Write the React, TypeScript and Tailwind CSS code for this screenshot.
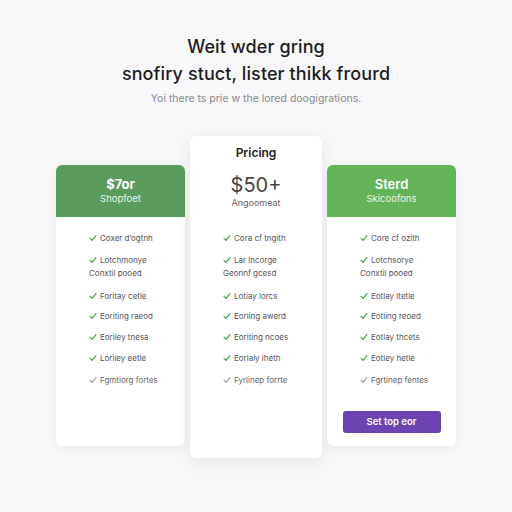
import React from 'react';

type Feature = { text: string; check?: boolean; faint?: boolean; gap?: string };

const Check = ({ faint }: { faint?: boolean }) => (
  <svg className="w-[8px] h-[8px] shrink-0" viewBox="0 0 12 12" fill="none">
    <path
      d="M1.5 6.5 4.5 9.5 10.5 2.5"
      stroke={faint ? '#9aa39a' : '#43a047'}
      strokeWidth={1.8}
      strokeLinecap="round"
      strokeLinejoin="round"
    />
  </svg>
);

const FeatureList = ({ items }: { items: Feature[] }) => (
  <ul className="flex flex-col pl-[33px] text-[8px] text-[#555]">
    {items.map((f, i) => (
      <li key={i} className={`flex items-center gap-[3px] h-[12px] ${f.gap ?? ''}`}>
        {f.check !== false && <Check faint={f.faint} />}
        <span className={f.faint ? 'text-[#666]' : ''}>{f.text}</span>
      </li>
    ))}
  </ul>
);

const left: Feature[] = [
  { text: 'Coxer d’ogtnh' },
  { text: 'Lotchmonye', gap: 'mt-[10px]' },
  { text: 'Conxtil pooed', check: false, gap: 'mt-[1px]' },
  { text: 'Foritay cetle', gap: 'mt-[11px]' },
  { text: 'Eoriting raeod', gap: 'mt-[8px]' },
  { text: 'Eoriley tnesa', gap: 'mt-[9px]' },
  { text: 'Loriley eetle', gap: 'mt-[9px]' },
  { text: 'Fgmtiorg fortes', faint: true, gap: 'mt-[10px]' },
];

const middle: Feature[] = [
  { text: 'Cora cf tngith' },
  { text: 'Lar lncorge', gap: 'mt-[10px]' },
  { text: 'Geonnf gcesd', check: false, gap: 'mt-[1px]' },
  { text: 'Lotiay lorcs', gap: 'mt-[11px]' },
  { text: 'Eorling awerd', gap: 'mt-[8px]' },
  { text: 'Eoriting ncoes', gap: 'mt-[9px]' },
  { text: 'Eorlaiy iheth', gap: 'mt-[9px]' },
  { text: 'Fyrlinep forrte', faint: true, gap: 'mt-[10px]' },
];

const right: Feature[] = [
  { text: 'Core cf ozith' },
  { text: 'Lotchsorye', gap: 'mt-[10px]' },
  { text: 'Conxtil pooed', check: false, gap: 'mt-[1px]' },
  { text: 'Eotlay ltetle', gap: 'mt-[11px]' },
  { text: 'Eotling reoed', gap: 'mt-[8px]' },
  { text: 'Eotlay thcets', gap: 'mt-[9px]' },
  { text: 'Eotley hetle', gap: 'mt-[9px]' },
  { text: 'Fgrtinep fentes', faint: true, gap: 'mt-[10px]' },
];

export default function App() {
  return (
    <div
      className="w-[512px] h-[512px] bg-[#f8f8fa] flex flex-col items-center overflow-hidden"
      style={{ fontFamily: 'Inter, "Noto Sans", sans-serif' }}
    >
      <h1 className="mt-[33px] text-[18px] leading-[27px] font-medium text-[#1d1d1f] text-center tracking-[0.1px]">
        Weit wder gring
        <br />
        snofiry stuct, lister thikk frourd
      </h1>
      <p className="mt-[4px] text-[10.5px] text-[#8a8a8e]">Yoi there ts prie w the lored doogigrations.</p>

      <div className="mt-[29px] flex items-start gap-[5px]">
        {/* left */}
        <div className="mt-[29px] w-[129px] h-[281px] bg-white rounded-[6px] shadow-[0_2px_10px_rgba(0,0,0,0.06)] overflow-hidden">
          <div className="h-[52px] bg-[#5a9c5d] flex flex-col items-center justify-center text-white">
            <div className="text-[13px] font-bold leading-[16px]">$7or</div>
            <div className="text-[9.5px] leading-[13px] text-[#eaf5ea]">Shopfoet</div>
          </div>
          <div className="pt-[15px]">
            <FeatureList items={left} />
          </div>
        </div>

        {/* middle */}
        <div className="w-[132px] h-[322px] bg-white rounded-[6px] shadow-[0_4px_18px_rgba(0,0,0,0.08)] flex flex-col">
          <div className="mt-[9px] text-center text-[12px] font-semibold text-[#222] leading-[16px]">Pricing</div>
          <div className="mt-[12px] text-center text-[20px] text-[#444] leading-[24px]">$50+</div>
          <div className="text-center text-[9px] text-[#666] leading-[11px]">Angoomeat</div>
          <div className="pt-[24px]">
            <FeatureList items={middle} />
          </div>
        </div>

        {/* right */}
        <div className="mt-[29px] w-[129px] h-[281px] bg-white rounded-[6px] shadow-[0_2px_10px_rgba(0,0,0,0.06)] overflow-hidden flex flex-col">
          <div className="h-[52px] bg-[#62b457] flex flex-col items-center justify-center text-white">
            <div className="text-[13px] font-semibold leading-[16px]">Sterd</div>
            <div className="text-[9.5px] leading-[13px] text-[#eef8ec]">Skicoofons</div>
          </div>
          <div className="pt-[15px]">
            <FeatureList items={right} />
          </div>
          <div className="mt-[25px] flex justify-center">
            <button className="w-[98px] h-[22px] rounded-[3px] bg-[#6b44b2] text-white text-[9.5px] font-semibold">
              Set top eor
            </button>
          </div>
        </div>
      </div>
    </div>
  );
}
